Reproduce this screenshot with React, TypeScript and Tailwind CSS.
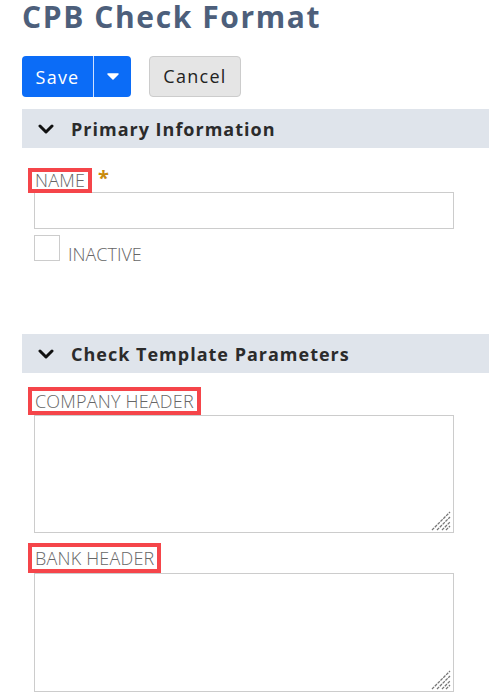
import React from 'react';

const font = { fontFamily: '"Open Sans", "Liberation Sans", sans-serif' };

function Chevron() {
  return (
    <svg width="16" height="10" viewBox="0 0 16 10" className="shrink-0">
      <path d="M2 2 L8 8 L14 2" fill="none" stroke="#111" strokeWidth="3" strokeLinecap="round" strokeLinejoin="round" />
    </svg>
  );
}

function SectionHeader({ title }: { title: string }) {
  return (
    <div className="flex h-[39px] items-center bg-[#dfe4eb] pl-[16px]">
      <Chevron />
      <span className="ml-[17px] text-[18px] font-bold leading-[24px] tracking-[1px] text-[#2b2b2b]">{title}</span>
    </div>
  );
}

// red annotation box around a field label
function Label({ text, required, box = 'h-[17px] leading-[17px]' }: { text: string; required?: boolean; box?: string }) {
  return (
    <div className="flex items-start pl-[10px] pt-[4px] pb-[4px]">
      <span className={`inline-block ${box} px-[3px] text-[18px] font-light tracking-[0.2px] text-[#666] outline-[4px] outline-solid outline-[#f5454a] outline-offset-0`}>
        {text}
      </span>
      {required && <span className="ml-[10px] -mt-[3px] h-[17px] text-[20px] font-bold leading-[17px] text-[#c98a0c]">*</span>}
    </div>
  );
}

function Grip() {
  return (
    <svg width="20" height="20" viewBox="0 0 20 20" className="pointer-events-none absolute bottom-[1px] right-[2px]">
      <g stroke="#767676" strokeWidth="1.3" strokeDasharray="3 1">
        <line x1="1" y1="19" x2="19" y2="1" />
        <line x1="6" y1="19" x2="19" y2="6" />
        <line x1="11" y1="19" x2="19" y2="11" />
        <line x1="15" y1="19" x2="19" y2="15" />
      </g>
    </svg>
  );
}

function TextArea({ height }: { height: string }) {
  return (
    <div className={`relative ml-[12px] w-[420px] ${height} border border-[#cccccc] bg-white`}>
      <Grip />
    </div>
  );
}

export default function App() {
  return (
    <div className="h-[700px] w-[489px] overflow-hidden bg-white pl-[22px]" style={font}>
      <h1 className="text-[30px] font-bold leading-[34px] tracking-[1.6px] text-[#4d5f7b]">CPB Check Format</h1>

      <div className="mt-[22px] flex gap-[18px]">
        <div className="flex h-[41px] w-[109px] items-stretch rounded-[4px] bg-[#0b6cf7] text-white">
          <span className="flex w-[71px] items-center justify-center text-[18px] leading-none tracking-[1.2px]">Save</span>
          <span className="w-px bg-[#cfe0ff]" />
          <span className="flex flex-1 items-center justify-center">
            <svg width="12" height="7" viewBox="0 0 12 7">
              <path d="M1 1 L11 1 L6 6 Z" fill="#fff" stroke="#fff" strokeWidth="1.5" strokeLinejoin="round" />
            </svg>
          </span>
        </div>
        <button className="h-[41px] w-[92px] rounded-[4px] border border-[#cccccc] bg-[#e5e5e5] text-[18px] tracking-[1.3px] text-[#222]">
          Cancel
        </button>
      </div>

      <div className="mt-[12px]">
        <SectionHeader title="Primary Information" />
      </div>

      <div className="mt-[20px]">
        <Label text="NAME" required />
        <div className="-mt-[1px] ml-[12px] h-[37px] w-[420px] border border-[#cccccc] bg-white" />
        <div className="ml-[12px] mt-[6px] flex items-baseline gap-[8px]">
          <div className="h-[26px] w-[26px] border border-[#cccccc] bg-white" />
          <span className="text-[18px] font-light leading-[24px] text-[#666]">INACTIVE</span>
        </div>
      </div>

      <div className="mt-[68px]">
        <SectionHeader title="Check Template Parameters" />
      </div>

      <div className="mt-[14px]">
        <Label text="COMPANY HEADER" box="h-[20px] leading-[20px]" />
        <TextArea height="h-[118px]" />
      </div>

      <div className="mt-[10px]">
        <Label text="BANK HEADER" box="h-[22px] leading-[22px]" />
        <TextArea height="h-[119px]" />
      </div>
    </div>
  );
}
